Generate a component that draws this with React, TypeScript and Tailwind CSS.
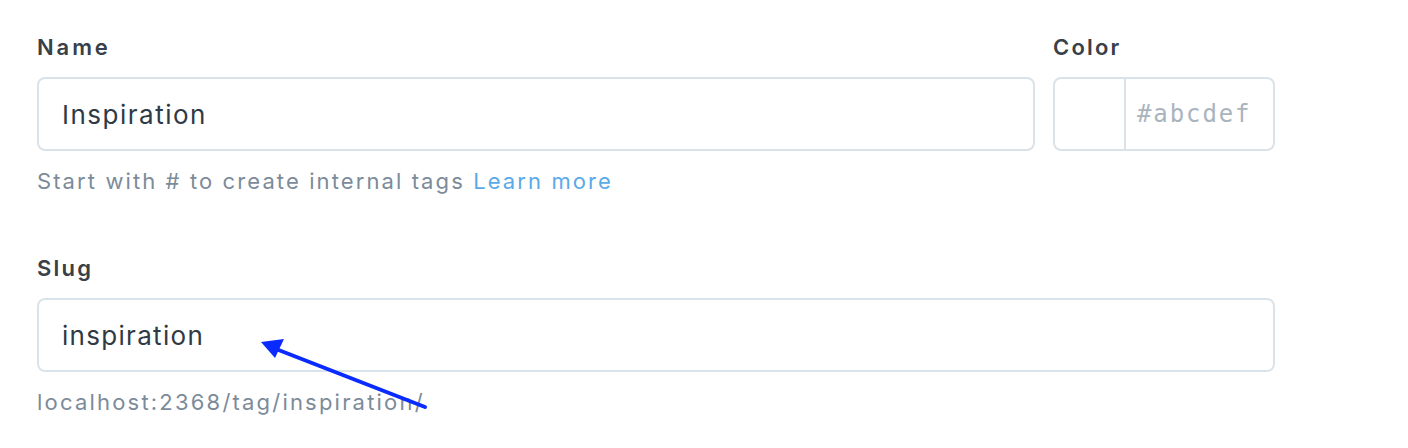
import React from "react";

export default function App() {
  return (
    <div
      className="relative w-[1408px] h-[448px] bg-white overflow-hidden"
      style={{ fontFamily: "Inter, 'Noto Sans', sans-serif" }}
    >
      <div className="pl-[37px] pt-[33px] w-[1275px]">
        <div className="flex gap-[18px]">
          <div className="flex-1 flex flex-col">
            <label className="text-[22px] font-semibold text-[#394047] leading-[28px] tracking-[2.9px]">Name</label>
            <div className="mt-[16px] h-[74px] rounded-[8px] border-2 border-[#dbe3ea] flex items-center px-[23px]">
              <span className="text-[26px] text-[#2f3a44] tracking-[1.5px]">Inspiration</span>
            </div>
            <p className="mt-[16px] text-[22px] leading-[28px] text-[#7c8b9a] tracking-[2.1px]">
              Start with # to create internal tags <span className="text-[#5aaae8]">Learn more</span>
            </p>
          </div>
          <div className="w-[222px] flex flex-col">
            <label className="text-[22px] font-semibold text-[#394047] leading-[28px] tracking-[2.2px]">Color</label>
            <div className="mt-[16px] h-[74px] rounded-[8px] border-2 border-[#dbe3ea] flex">
              <div className="w-[71px] border-r-2 border-[#dbe3ea]" />
              <div className="flex-1 flex items-center pl-[11px]">
                <span
                  className="text-[24px] text-[#a9b4be] tracking-[1.9px]"
                  style={{ fontFamily: "'DejaVu Sans Mono', monospace" }}
                >
                  #abcdef
                </span>
              </div>
            </div>
          </div>
        </div>
        <div className="mt-[59px] flex flex-col">
          <label className="text-[22px] font-semibold text-[#394047] leading-[28px] tracking-[2.2px]">Slug</label>
          <div className="mt-[16px] h-[74px] rounded-[8px] border-2 border-[#dbe3ea] flex items-center px-[23px]">
            <span className="text-[26px] text-[#2f3a44] tracking-[1.3px]">inspiration</span>
          </div>
          <p className="mt-[16px] text-[22px] leading-[28px] text-[#7c8b9a] tracking-[2.2px]">localhost:2368/tag/inspiration/</p>
        </div>
      </div>
      <svg className="absolute left-0 top-0 pointer-events-none" width="1408" height="448">
        <line x1="425" y1="407" x2="276" y2="349" stroke="#0a2bff" strokeWidth="4" strokeLinecap="round" />
        <polygon points="261,342 284,339 275,358" fill="#0a2bff" />
      </svg>
    </div>
  );
}
